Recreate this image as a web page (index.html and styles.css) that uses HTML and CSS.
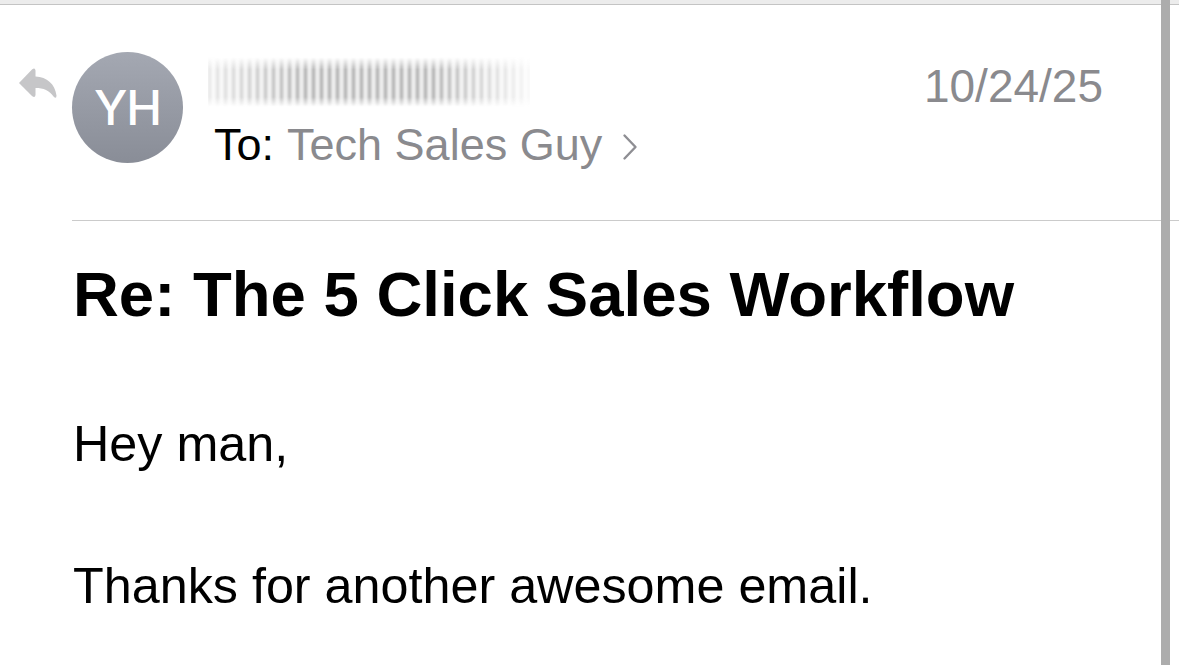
FILE: index.html
```html
<!DOCTYPE html>
<html lang="en">
<head>
<meta charset="utf-8">
<title>Re: The 5 Click Sales Workflow</title>
<link rel="stylesheet" href="styles.css">
</head>
<body>
<div class="page">
  <div class="topband"></div>
  <header class="header">
    <svg class="reply" width="40" height="33" viewBox="0 0 40 33" aria-hidden="true">
      <path d="M1 16 L14 2.5 Q17 0 17.5 3.5 L17.5 9.5 C29 10 37 17 38.5 28.5 Q38.5 32.5 35.5 29.5 C31.5 23.5 25.5 21 17.5 21 L17.5 28 Q17 31.5 14 29 Z" fill="#c6c6c8"/>
    </svg>
    <div class="avatar">YH</div>
    <div class="meta">
      <div class="sender" aria-label="sender name hidden"></div>
      <div class="to">
        <span class="to-label">To:</span>
        <span class="to-name">Tech Sales Guy</span>
        <svg class="chev" width="16" height="28" viewBox="0 0 16 28" aria-hidden="true">
          <path d="M2.5 2.5 L13.5 14 L2.5 25.5" fill="none" stroke="#8e8e93" stroke-width="2.4" stroke-linecap="round" stroke-linejoin="round"/>
        </svg>
      </div>
    </div>
    <div class="date">10/24/25</div>
  </header>
  <div class="divider"></div>
  <main class="content">
    <h1 class="subject">Re: The 5 Click Sales Workflow</h1>
    <p class="para">Hey man,</p>
    <p class="para">Thanks for another awesome email.</p>
  </main>
  <div class="scrollbar"></div>
</div>
</body>
</html>
```

FILE: styles.css
```css
html, body {
  margin: 0;
  padding: 0;
  background: #ffffff;
}

body {
  font-family: "Liberation Sans", Arial, sans-serif;
  color: #000;
  overflow: hidden;
}

.page {
  position: relative;
  width: 1179px;
  height: 665px;
  overflow: hidden;
}

.topband {
  height: 4px;
  background: #ececec;
  border-bottom: 1px solid #c4c4c4;
}

.header {
  display: flex;
  align-items: flex-start;
  padding: 47px 76px 49px 18px;
}

.reply {
  flex: none;
  margin-top: 15px;
  margin-right: 14px;
}

.avatar {
  flex: none;
  width: 111px;
  height: 111px;
  border-radius: 50%;
  background: linear-gradient(#a4a8b2, #898d97);
  color: #fff;
  font-family: "Inter", "Liberation Sans", sans-serif;
  font-weight: 500;
  font-size: 48px;
  letter-spacing: -1px;
  display: flex;
  align-items: center;
  justify-content: center;
}

.meta {
  flex: 1;
  margin-left: 25px;
  display: flex;
  flex-direction: column;
}

.sender {
  margin-top: 5px;
  width: 322px;
  height: 50px;
  background:
    repeating-linear-gradient(90deg, rgba(110,110,110,0.6) 0 3px, rgba(210,210,210,0.3) 3px 8px);
  -webkit-mask-image: linear-gradient(90deg, rgba(0,0,0,0.3) 0%, #000 30%, #000 70%, rgba(0,0,0,0.1) 100%),
                      linear-gradient(180deg, transparent 0%, #000 25%, #000 80%, transparent 100%);
  -webkit-mask-composite: source-in;
  mask-composite: intersect;
  filter: blur(1.5px);
  margin-bottom: 12px;
}

.to {
  display: flex;
  align-items: center;
  font-size: 45px;
  line-height: 52px;
  padding-left: 6px;
}

.to-label {
  color: #000;
}

.to-name {
  color: #8a8a8e;
  margin-left: 13px;
}

.chev {
  margin-left: 20px;
  margin-top: 4px;
}

.date {
  flex: none;
  margin-top: 7px;
  font-size: 46px;
  line-height: 54px;
  color: #8a8a8e;
}

.divider {
  margin-left: 72px;
  border-top: 1px solid #cbcbcb;
}

.content {
  padding: 35px 0 0 73px;
  display: flex;
  flex-direction: column;
  gap: 82px;
}

.subject {
  margin: 0;
  font-size: 63.5px;
  line-height: 76px;
  font-weight: 700;
}

.para {
  margin: 0;
  font-size: 50.3px;
  line-height: 60px;
}

.scrollbar {
  position: absolute;
  top: 0;
  right: 9px;
  width: 9px;
  height: 100%;
  background: #acacac;
}
```
